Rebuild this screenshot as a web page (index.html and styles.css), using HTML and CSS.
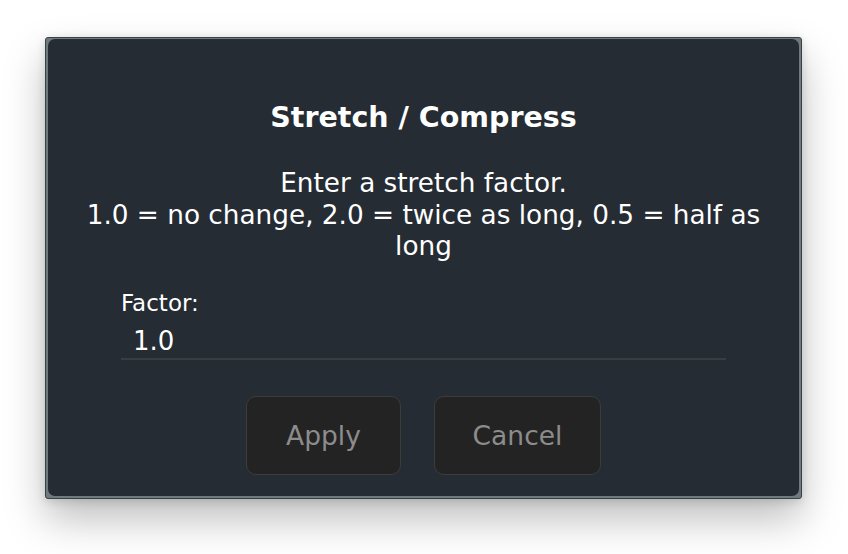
FILE: index.html
```html
<!DOCTYPE html>
<html>
<head>
<meta charset="utf-8">
<link rel="stylesheet" href="styles.css">
</head>
<body>
<div class="frame">
  <div class="dialog">
    <h1 class="title">Stretch / Compress</h1>
    <p class="desc">Enter a stretch factor.<br>1.0 = no change, 2.0 = twice as long, 0.5 = half as long</p>
    <div class="field">
      <label class="label">Factor:</label>
      <div class="input">1.0</div>
    </div>
    <div class="buttons">
      <button class="btn btn-apply">Apply</button>
      <button class="btn btn-cancel">Cancel</button>
    </div>
  </div>
</div>
</body>
</html>
```
FILE: styles.css
```css
html, body {
  margin: 0;
  padding: 0;
  background: #ffffff;
}
body {
  font-family: "DejaVu Sans", sans-serif;
  padding: 37px 0 0 45px;
  min-height: 554px;
  box-sizing: border-box;
}
.frame {
  width: 757px;
  height: 462px;
  box-sizing: border-box;
  background: #6f7a7e;
  border: 1px solid #3b4042;
  border-radius: 3px;
  padding: 1px 2px 2px 2px;
  box-shadow: 0 20px 40px rgba(0,0,0,0.26), 0 2px 10px rgba(0,0,0,0.14);
}
.dialog {
  height: 100%;
  box-sizing: border-box;
  background: #252c33;
  border-radius: 7px;
  display: flex;
  flex-direction: column;
  align-items: center;
  padding: 61px 20px 0;
  color: #ffffff;
}
.title {
  margin: 0;
  font-size: 28.5px;
  font-weight: bold;
  line-height: 36px;
}
.desc {
  margin: 32px 0 0;
  max-width: 700px;
  font-size: 26.3px;
  line-height: 31.5px;
  text-align: center;
}
.field {
  width: 605px;
  margin-top: 26px;
  display: flex;
  flex-direction: column;
}
.label {
  font-size: 23px;
  line-height: 28px;
}
.input {
  font-size: 26px;
  line-height: 33px;
  padding: 8px 12px 0;
  border-bottom: 2px solid #3a3d3f;
}
.buttons {
  display: flex;
  gap: 33px;
  margin-top: 36px;
}
.btn {
  font-family: inherit;
  font-size: 26.5px;
  color: #8c8c8c;
  background: #232323;
  border: 1px solid #3c3c3c;
  border-radius: 10px;
  height: 79px;
  padding: 0;
}
.btn-apply { width: 155px; }
.btn-cancel { width: 167px; }
```
